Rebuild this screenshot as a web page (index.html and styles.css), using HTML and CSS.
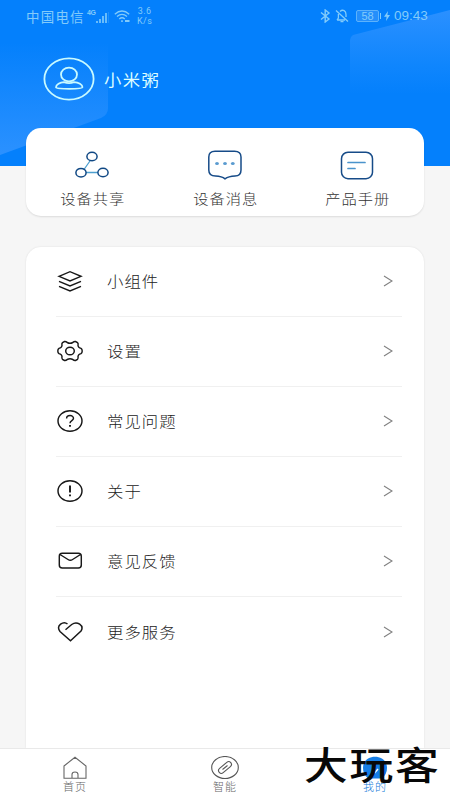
FILE: index.html
```html
<!DOCTYPE html>
<html lang="zh-CN">
<head>
<meta charset="utf-8">
<title>我的</title>
<link rel="stylesheet" href="styles.css">
</head>
<body>
<div class="app">
  <header class="header">
    <svg class="header-art" viewBox="0 0 450 166" aria-hidden="true">
      <defs>
        <linearGradient id="gl" x1="0" y1="0" x2="0" y2="1"><stop offset="0.1" stop-color="#0480fc"/><stop offset="1" stop-color="#2b91ff"/></linearGradient>
        <linearGradient id="gr" x1="0" y1="0" x2="0" y2="1"><stop offset="0" stop-color="#2b90ff"/><stop offset="0.38" stop-color="#1086fd"/><stop offset="0.6" stop-color="#0480fc"/></linearGradient>
      </defs>
      <path d="M0 30H108V108Q108 115 101 118L0 155Z" fill="url(#gl)"/>
      <path d="M350 40Q350 37 353 35L450 10V150H350Z" fill="url(#gr)"/>
    </svg>
    <div class="status">
      <span class="carrier">中国电信</span>
      <span class="net">4G</span>
      <svg class="signal" width="13" height="11" viewBox="0 0 13 11"><path d="M1 9v2M4 7v4M7 4v7M10 1v10" stroke="currentColor" stroke-width="1.6"/><path d="M12.6 0v11" stroke="currentColor" stroke-width=".5" opacity=".5"/></svg>
      <svg class="wifi" width="17" height="13" viewBox="0 0 17 13" fill="none" stroke="currentColor" stroke-width="1.3"><path d="M.8 4.2Q8-2.3 15.2 4.2M3 6.6Q8 2.2 13 6.6M5.3 9Q8 6.6 10.8 9"/><path d="M7.2 11.2h1.6M11 11h4.5" stroke-width="1.8"/></svg>
      <span class="speed">3.6<br>K/s</span>
      <svg class="bt" width="11" height="14" viewBox="0 0 11 14" fill="none" stroke="currentColor" stroke-width="1.4"><path d="M1 3.5L9 10L5.2 13V1L9 4L1 10.5"/></svg>
      <svg class="bell" width="14" height="14" viewBox="0 0 14 14" fill="none" stroke="currentColor" stroke-width="1.3"><path d="M1 1.5L13 12.5M2 11H10M3.4 5V9L2 11M5 2.5C8-.2 11 2 11 5.500V8M5.500 12.700H8.500"/></svg>
      <span class="battery">58</span>
      <svg class="bolt" width="6" height="10" viewBox="0 0 6 10"><path d="M4 0L0 5.7H2.6L2 10L6 4.1H3.4Z" fill="currentColor"/></svg>
      <span class="time">09:43</span>
    </div>
    <div class="profile">
      <svg width="52" height="44" viewBox="0 0 52 44" fill="none" stroke="#c8faff" stroke-width="1.8"><ellipse cx="26" cy="22" rx="24.6" ry="20.6"/><ellipse cx="26" cy="17.5" rx="8" ry="6.9"/><path d="M13 30.2C13 27.5 17 25.4 21 25.2Q26 27.2 31 25.2C35.500 25.400 39.500 27.500 39.500 30.200C39.500 32.300 13 32.300 13 30.200Z" stroke-linejoin="round"/></svg>
      <span class="name">小米粥</span>
    </div>
  </header>

  <nav class="shortcuts">
    <a class="shortcut">
      <svg width="36" height="32" viewBox="0 0 36 32" fill="none"><path d="M16.300 10.500L10 19.500M12 22.500H24" stroke="#4d9fcf" stroke-width="1.300"/><g stroke="#104884" stroke-width="1.500"><ellipse cx="18" cy="6.500" rx="5.100" ry="4.300"/><ellipse cx="7" cy="22.700" rx="5.100" ry="4.300"/><ellipse cx="29" cy="22.500" rx="5.100" ry="4.300"/></g></svg>
      <span>设备共享</span>
    </a>
    <a class="shortcut">
      <svg width="36" height="32" viewBox="0 0 36 32" fill="none"><path d="M8 1.200H27.500Q34 1.200 34 7V20Q34 26 28 26Q21.500 26.300 18 28.800Q15 26.300 8.500 26Q1.800 26 1.800 20V7Q1.800 1.200 8 1.200Z" stroke="#164b88" stroke-width="1.500"/><g fill="#5a9bd0"><ellipse cx="10" cy="13.500" rx="1.900" ry="1.600"/><ellipse cx="18" cy="13.500" rx="1.900" ry="1.600"/><ellipse cx="25.800" cy="13.500" rx="1.900" ry="1.600"/></g></svg>
      <span>设备消息</span>
    </a>
    <a class="shortcut">
      <svg width="36" height="32" viewBox="0 0 36 32" fill="none"><rect x="1.500" y="2.200" width="31" height="26.500" rx="6.500" stroke="#164b88" stroke-width="1.500"/><path d="M8 12.500H25M8 18.500H15" stroke="#4a93cc" stroke-width="1.700" stroke-linecap="round"/></svg>
      <span>产品手册</span>
    </a>
  </nav>

  <main class="menu">
    <a class="row">
      <svg class="icon" viewBox="0 0 26 24"><path d="M2 7.300L13 2.700L24 7.300L13 12Z"/><path d="M2 12.400L13 17L24 12.400M2 17.400L13 22L24 17.400"/></svg>
      <span class="label">小组件</span>
      <svg class="chev" viewBox="0 0 10 12"><path d="M1 1L9 6L1 11"/></svg>
    </a>
    <a class="row">
      <svg class="icon" viewBox="0 0 26 24"><path d="M5.500 3.600L7.500 2.500Q9 2.300 10.200 3.500Q13 5 15.800 3.500Q17 2.300 18.500 2.500L20.500 3.600Q21.500 4.500 21 6.500Q21.300 8.800 24 9.400Q25.200 10.200 25.200 12Q25.200 13.800 24 14.600Q21.300 15.200 21 17.500Q21.500 19.500 20.500 20.400L18.500 21.500Q17 21.700 15.800 20.500Q13 19 10.200 20.500Q9 21.700 7.500 21.500L5.500 20.400Q4.500 19.500 5 17.500Q4.700 15.200 2 14.600Q.8 13.800 .8 12Q.8 10.200 2 9.400Q4.700 8.800 5 6.500Q4.500 4.500 5.500 3.600Z"/><ellipse cx="13" cy="12" rx="4.300" ry="3.800"/></svg>
      <span class="label">设置</span>
      <svg class="chev" viewBox="0 0 10 12"><path d="M1 1L9 6L1 11"/></svg>
    </a>
    <a class="row">
      <svg class="icon" viewBox="0 0 26 24"><ellipse cx="13" cy="12" rx="12" ry="10.200"/><path d="M9.600 9.500C9.600 5.600 16.500 5.700 16.500 9.300C16.500 11.600 13 11.600 13 14.300"/><path d="M13 16V17.700" stroke-width="1.900"/></svg>
      <span class="label">常见问题</span>
      <svg class="chev" viewBox="0 0 10 12"><path d="M1 1L9 6L1 11"/></svg>
    </a>
    <a class="row">
      <svg class="icon" viewBox="0 0 26 24"><ellipse cx="13" cy="12" rx="12" ry="10.200"/><path d="M13 6.500V13.500M13 15.500V17.300" stroke-width="1.900"/></svg>
      <span class="label">关于</span>
      <svg class="chev" viewBox="0 0 10 12"><path d="M1 1L9 6L1 11"/></svg>
    </a>
    <a class="row">
      <svg class="icon" viewBox="0 0 26 24"><rect x="2.300" y="4.300" width="22" height="14.700" rx="3"/><path d="M3 5.500L11 10.500Q13.300 12 15.600 10.500L23.500 5.500"/></svg>
      <span class="label">意见反馈</span>
      <svg class="chev" viewBox="0 0 10 12"><path d="M1 1L9 6L1 11"/></svg>
    </a>
    <a class="row">
      <svg class="icon" viewBox="0 0 26 24"><path d="M8.500 9.700L14.700 4.500C20 .5 27.500 5.500 24 11L13.500 20.800L3 11.500C-1.500 5.500 6.500 .5 10.500 4"/></svg>
      <span class="label">更多服务</span>
      <svg class="chev" viewBox="0 0 10 12"><path d="M1 1L9 6L1 11"/></svg>
    </a>
  </main>

  <footer class="tabs">
    <a class="tab">
      <svg width="28" height="24" viewBox="0 0 28 24" fill="none" stroke="#666" stroke-width="1.100"><path d="M3 10L14 1.200L25 10V22.300H3ZM11 22V18.500Q11 16 14 16T17 18.500V22"/></svg>
      <span>首页</span>
    </a>
    <a class="tab">
      <svg width="28" height="24" viewBox="0 0 28 24" fill="none" stroke="#555" stroke-width="1.100"><ellipse cx="14" cy="11.500" rx="13.300" ry="11"/><rect x="6.500" y="8.700" width="15" height="5.600" rx="2.800" transform="rotate(-40 14 11.500)"/><path d="M11.500 13.500L16.500 9.500"/></svg>
      <span>智能</span>
    </a>
    <a class="tab active">
      <svg width="28" height="24" viewBox="0 0 28 24"><path d="M2 12C2-3 26-3 26 12Q26 18 21 22.500H7Q2 18 2 12Z" fill="#167ee6"/><path d="M12 15L14 16.500L17 13" fill="none" stroke="#fff" stroke-width="1.500"/></svg>
      <span>我的</span>
    </a>
    <div class="brand">大玩客</div>
  </footer>
</div>
</body>
</html>
```

FILE: styles.css
```css
* { box-sizing: border-box; }

body {
  margin: 0;
  background: #f6f6f6;
  font-family: "Noto Sans CJK SC", sans-serif;
}

.app {
  display: flex;
  flex-direction: column;
  width: 450px;
  height: 800px;
  overflow: hidden;
}

.header {
  position: relative;
  flex: none;
  height: 166px;
  background: #0480fc;
}

.header-art {
  position: absolute;
  inset: 0;
  width: 100%;
  height: 100%;
}

.status {
  position: relative;
  display: flex;
  align-items: center;
  height: 32px;
  padding: 0 21px 0 26px;
  color: #83cbfa;
  white-space: nowrap;
}

.status svg { flex: none; }

.carrier {
  width: 60px;
  font-size: 13.5px;
  letter-spacing: 1.2px;
}

.net {
  width: 9px;
  margin: -8px 0 0 1px;
  font: bold 7px "Liberation Sans", sans-serif;
  letter-spacing: -0.5px;
}

.signal { margin-top: 2px; }
.wifi { margin-left: 5px; }

.speed {
  margin-left: 6px;
  font: 9px/10px Roboto, sans-serif;
  letter-spacing: 0.4px;
  text-align: center;
}

.bt { margin-left: auto; }
.bell { margin-left: 4px; }

.battery {
  position: relative;
  width: 23px;
  height: 12px;
  margin-left: 7px;
  border: 1px solid #5db2fb;
  border-radius: 2px;
  background: #258ffb;
  font: 11px/10px "Liberation Sans", sans-serif;
  text-align: center;
}

.battery::after {
  content: "";
  position: absolute;
  top: 2px;
  right: -3px;
  width: 1.5px;
  height: 6px;
  background: #83cbfa;
}

.bolt { margin-left: 5px; }

.time {
  width: 35px;
  margin-left: 4px;
  font: 13.5px/16px "Liberation Sans", sans-serif;
}

.profile {
  position: relative;
  display: flex;
  align-items: center;
  gap: 9px;
  height: 44px;
  margin: 25px 0 0 43px;
}

.name {
  padding-bottom: 1px;
  color: #dcfcff;
  font-size: 15.5px;
  font-weight: 400;
  letter-spacing: 1.2px;
  transform: scaleX(1.12);
  transform-origin: left;
}

.shortcuts {
  position: relative;
  display: grid;
  grid-template-columns: repeat(3, 1fr);
  flex: none;
  height: 88px;
  margin: -38px 26px 0;
  padding-top: 22px;
  border-radius: 15px;
  background: #fff;
  box-shadow: 0 1px 2px #0000001c;
}

.shortcut {
  display: flex;
  flex-direction: column;
  align-items: center;
  gap: 5px;
  color: #333;
  font-size: 13.5px;
  font-weight: 300;
  line-height: 22px;
  letter-spacing: 0.9px;
}

.shortcut span {
  margin-left: 1px;
  transform: scaleX(1.13);
}

.menu {
  flex: 1;
  min-height: 0;
  margin: 31px 26px 0;
  border-radius: 15px 15px 0 0;
  background: #fff;
  box-shadow: 0 0 2px #0000001c;
}

.row {
  display: flex;
  align-items: center;
  height: 70.1px;
  margin: 0 22px 0 30px;
  padding-bottom: 2px;
  border-bottom: 1px solid #f0f0f0;
}

.row:last-child { border-bottom: 0; }

.icon {
  width: 26px;
  height: 24px;
  margin-left: 1px;
  fill: none;
  stroke: #181818;
  stroke-width: 1.45;
}

.label {
  flex: none;
  margin: 0 auto 0 24px;
  color: #222;
  font-size: 14.5px;
  font-weight: 300;
  letter-spacing: 0.9px;
  transform: scaleX(1.13);
  transform-origin: left;
}

.chev {
  width: 10px;
  height: 12px;
  margin-right: 9px;
  fill: none;
  stroke: #808080;
  stroke-width: 1.1;
}

.tabs {
  position: relative;
  display: grid;
  grid-template-columns: repeat(3, 1fr);
  flex: none;
  height: 52px;
  padding-top: 7px;
  border-top: 1px solid #e9e9e9;
  background: #fff;
}

.tab {
  display: flex;
  flex-direction: column;
  align-items: center;
  color: #666;
  font-size: 11px;
  font-weight: 300;
  line-height: 12px;
  letter-spacing: 1px;
}

.active { color: #1479d8; }

.brand {
  position: absolute;
  left: 304px;
  top: -7px;
  color: #080808;
  font-size: 38px;
  font-weight: 500;
  line-height: 42px;
  letter-spacing: 1.6px;
  white-space: nowrap;
  transform: scaleX(1.15);
  transform-origin: left;
}
```
